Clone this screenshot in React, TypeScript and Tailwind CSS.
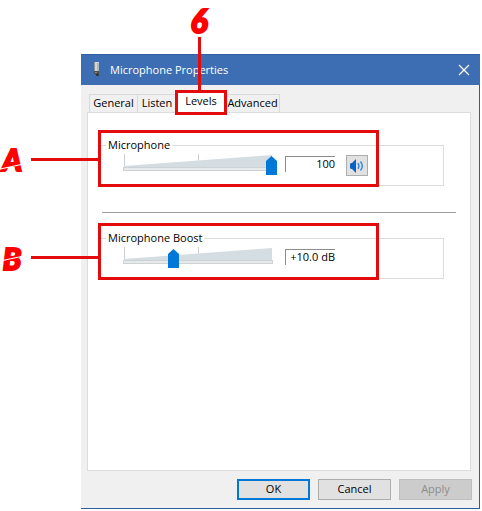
import React, { useState } from 'react';

const TABS = ['General', 'Listen', 'Levels', 'Advanced'];

const DeviceIcon: React.FC = () => (
  <svg width="10" height="16" viewBox="0 0 10 16" aria-hidden="true">
    <rect x="2" y="0" width="5" height="9" fill="#d3d6d8" />
    <rect x="2" y="0" width="1" height="9" fill="#8d9296" />
    <rect x="5" y="1" width="2" height="8" fill="#b4b8ba" />
    <path d="M2 9h5v3l-1 1H4l-2-2z" fill="#4a4d52" />
    <path d="M3 10h2v1H3z" fill="#a08c5c" />
    <path d="M4 12h3v2H4z" fill="#33363a" />
  </svg>
);

const SpeakerIcon: React.FC = () => (
  <svg width="16" height="14" viewBox="0 0 16 14" aria-hidden="true">
    <path d="M1 5l1-1h1l4-4v14l-4-4H2L1 9z" fill="#0a62c4" />
    <path d="M9 4.2q1.8 2.8 0 5.600" fill="none" stroke="#2f86dd" strokeWidth="1.4" />
    <path d="M11.500 2.500q3.600 4.500 0 9" fill="none" stroke="#2f86dd" strokeWidth="1.4" />
  </svg>
);

interface CalloutProps {
  letter: string;
}

// Red frame around a group, with a leader line to its letter on the left
const Callout: React.FC<CalloutProps> = ({ letter }) => (
  <div className="pointer-events-none absolute -top-[7px] -left-[2px] right-[65px] h-[57px] border-3 border-[#e30b0b]">
    <div
      className={`absolute right-full h-[3px] w-[70px] bg-[#e30b0b] ${letter === 'A' ? 'top-[25px]' : 'top-[30px]'}`}
    />
    <div
      className={`absolute -left-[102px] w-[26px] text-center font-['Lato'] text-[30px] leading-[32px] font-black text-[#f00] italic [-webkit-text-stroke:2px_#f00] ${
        letter === 'A' ? 'top-[10px]' : 'top-[16px]'
      }`}
    >
      {letter}
      <span
        className={`absolute left-[1px] h-[1px] w-[24px] -rotate-12 bg-white ${
          letter === 'A' ? 'top-[23px]' : 'top-[16px]'
        }`}
      />
    </div>
  </div>
);

interface LevelGroupProps {
  id: string;
  title: string;
  letter: string;
  max: number;
  value: number;
  text: string;
  onChange: (value: number) => void;
  children?: React.ReactNode;
}

const LevelGroup: React.FC<LevelGroupProps> = ({ id, title, letter, max, value, text, onChange, children }) => (
  <div className="relative mr-[14px]">
    <fieldset className="border border-[#dcdcdc] pl-[18px]">
      <legend className="-ml-[13px] px-[2px] leading-[16px]">
        <label htmlFor={id}>{title}</label>
      </legend>
      <div className="flex h-[32px] items-start">
        <div className="relative h-[22px] w-[158px] shrink-0">
          <svg className="block" width="158" height="22" viewBox="0 0 158 22" aria-hidden="true">
            <path d="M5.5 1v13M79.5 1v8" stroke="#ccd0d2" />
            <path d="M5 13L153 2v12H5z" fill="#d3dde2" />
            <rect x="4.5" y="14.5" width="149" height="3" fill="#e7eaea" stroke="#cdd3d5" />
          </svg>
          <input
            id={id}
            type="range"
            min={0}
            max={max}
            value={value}
            onChange={(e) => onChange(Number(e.target.value))}
            className="absolute bottom-0 left-0 m-0 h-[19px] w-full appearance-none bg-transparent [&::-webkit-slider-thumb]:h-[19px] [&::-webkit-slider-thumb]:w-[11px] [&::-webkit-slider-thumb]:appearance-none [&::-webkit-slider-thumb]:bg-[#0078d7] [&::-webkit-slider-thumb]:[clip-path:polygon(50%_0,100%_26%,100%_100%,0_100%,0_26%)]"
          />
        </div>
        <input
          type="text"
          readOnly
          value={text}
          aria-label={`${title} value`}
          className="mt-[3px] ml-[8px] h-[16px] w-[50px] border-t border-l border-[#8c8c8c] bg-white text-right"
        />
        {children}
      </div>
    </fieldset>
    <Callout letter={letter} />
  </div>
);

const App: React.FC = () => {
  const [tab, setTab] = useState<string>('Levels');
  const [level, setLevel] = useState<number>(100);
  const [boost, setBoost] = useState<number>(10);

  return (
    <div className="bg-white pt-[54px] pr-[2px] pb-[2px] pl-[81px] font-['Open_Sans','Noto_Sans',sans-serif] text-[11px] text-black">
      <div className="border-r border-b border-[#2c5f9e] bg-[#f0f0f0]">
        {/* Title bar */}
        <header className="-mr-px flex h-[31px] items-center border-t border-[#305fa3] bg-[#3d6eb3] pr-[10px] pl-[11px] text-white">
          <DeviceIcon />
          <h1 className="ml-[8px] grow">Microphone Properties</h1>
          <button type="button" aria-label="Close">
            <svg width="12" height="12" viewBox="0 0 12 12" aria-hidden="true">
              <path d="M1 1l10 10M11 1L1 11" stroke="#fff" strokeWidth="1.3" />
            </svg>
          </button>
        </header>

        <div className="pt-[7px] pr-[8px] pb-[8px] pl-[6px]">
          {/* Tabs */}
          <nav className="flex h-[20px] items-end pl-[2px]">
            {TABS.map((name) => (
              <button
                key={name}
                type="button"
                onClick={() => setTab(name)}
                className={`relative border-t border-r border-[#d9d9d9] text-center first:border-l ${
                  name === 'Listen' ? 'w-[39px]' : name === 'Advanced' ? 'w-[54px]' : 'w-[49px]'
                } ${tab === name ? 'z-10 h-[20px] bg-white pb-[2px]' : 'h-[18px] bg-[#f0f0f0]'}`}
              >
                {name}
                {name === 'Levels' && (
                  <span className="pointer-events-none absolute -top-[3px] -right-[2px] -left-[2px] h-[25px] border-3 border-[#e30b0b]">
                    <span className="absolute bottom-full left-[20px] h-[56px] w-[3px] bg-[#e30b0b]" />
                    <span className="absolute -top-[88px] left-[7px] w-[28px] text-center font-['Lato'] text-[32px] leading-[32px] font-black text-[#f00] italic [-webkit-text-stroke:2px_#f00]">
                      6
                    </span>
                  </span>
                )}
              </button>
            ))}
          </nav>

          <main className="min-h-[359px] border border-[#dcdcdc] bg-white pt-[24px] pr-[12px] pl-[12px]">
            <LevelGroup
              id="mic"
              title="Microphone"
              letter="A"
              max={100}
              value={level}
              text={String(level)}
              onChange={setLevel}
            >
              <button
                type="button"
                aria-label="Mute"
                className="mt-[2px] ml-[11px] flex h-[21px] w-[22px] items-center justify-center border border-[#adadad] bg-[#e1e1e1]"
              >
                <SpeakerIcon />
              </button>
            </LevelGroup>
            <hr className="mx-[2px] mt-[26px] mb-[17px] border-[#a0a0a0]" />
            <LevelGroup
              id="boost"
              title="Microphone Boost"
              letter="B"
              max={30}
              value={boost}
              text={`+${boost.toFixed(1)} dB`}
              onChange={setBoost}
            />
          </main>

          {/* Dialog buttons */}
          <footer className="-mr-px mt-[8px] flex justify-end gap-[8px]">
            <button type="button" className="h-[21px] w-[73px] border-2 border-[#0078d7] bg-[#e1e1e1]">
              OK
            </button>
            <button type="button" className="h-[21px] w-[73px] border border-[#adadad] bg-[#e1e1e1]">
              Cancel
            </button>
            <button
              type="button"
              disabled
              className="h-[21px] w-[73px] border border-[#bfbfbf] bg-[#cccccc] text-[#8c8c8c]"
            >
              Apply
            </button>
          </footer>
        </div>
      </div>
    </div>
  );
};

export default App;
